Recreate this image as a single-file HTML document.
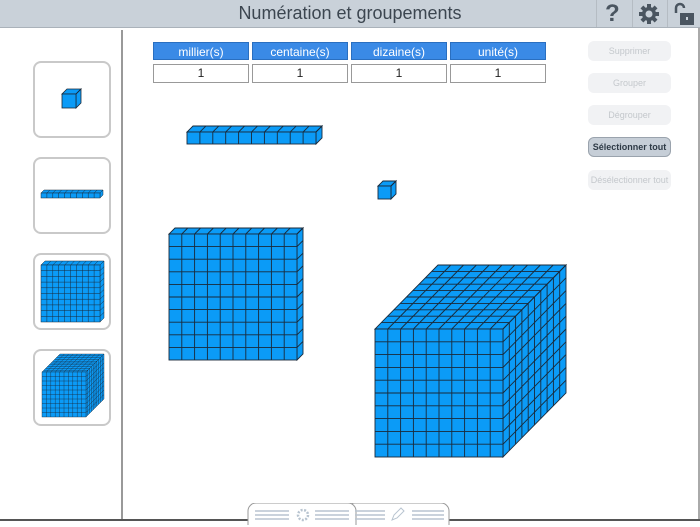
<!DOCTYPE html>
<html><head><meta charset="utf-8">
<style>
body{margin:0;width:700px;height:525px;overflow:hidden;background:#fff;font-family:"Liberation Sans",sans-serif;position:relative}
.hdr{position:absolute;left:0;top:0;width:700px;height:27px;background:#c9d1d9;border-bottom:1px solid #aab2ba}
.hdr .t{position:absolute;left:0;width:700px;text-align:center;top:3px;font-size:18px;color:#3c4650}
.abs{position:absolute}
.th{position:absolute;top:42px;height:18px;width:96px;background:#3a8ae6;color:#fff;font-size:12px;text-align:center;line-height:18px;border:1px solid #2a6fc0;box-sizing:border-box}
.td{position:absolute;top:64px;height:19px;width:96px;background:#fff;border:1px solid #999;box-sizing:border-box;font-size:12px;text-align:center;line-height:17px;color:#222}
.btn{position:absolute;left:588px;width:83px;height:20px;border-radius:6px;background:#f1f2f4;color:#c4c8cc;font-size:9px;text-align:center;line-height:20px}
.box{position:absolute;left:33px;width:78px;height:77px;border:2px solid #c9c9c9;border-radius:8px;box-sizing:border-box}
</style></head><body>
<div class="hdr"><div class="t">Numération et groupements</div>
<div class="abs" style="left:596px;top:0;width:1px;height:27px;background:#b5bcc3"></div>
<div class="abs" style="left:632px;top:0;width:1px;height:27px;background:#b5bcc3"></div>
<div class="abs" style="left:667px;top:0;width:1px;height:27px;background:#b5bcc3"></div>
<div class="abs" style="left:605px;top:0px;font-size:24px;font-weight:bold;color:#4a5560">?</div>
<svg class="abs" style="left:638px;top:3px" width="22" height="22" viewBox="0 0 22 22"><g fill="#4a5560"><circle cx="11" cy="11" r="7"/><g id="g"><rect x="9" y="1" width="4" height="20"/></g><use href="#g" transform="rotate(45 11 11)"/><use href="#g" transform="rotate(90 11 11)"/><use href="#g" transform="rotate(135 11 11)"/></g><circle cx="11" cy="11" r="3.5" fill="#c9d1d9"/></svg>
<svg class="abs" style="left:671px;top:2px" width="26" height="24" viewBox="0 0 26 24"><path d="M5 11V6a4 4 0 0 1 8 0" fill="none" stroke="#4a5560" stroke-width="2.5"/><rect x="9" y="11" width="14" height="12" fill="#4a5560"/><rect x="15" y="15" width="2" height="3" fill="#c9d1d9"/></svg>
</div>
<div class="abs" style="left:121px;top:30px;width:2px;height:490px;background:#999"></div>
<div class="abs" style="left:698px;top:28px;width:2px;height:497px;background:#aaa"></div>
<div class="abs" style="left:0;top:519px;width:700px;height:6px;background:#fff;border-top:2px solid #555"></div>
<div class="th" style="left:153px">millier(s)</div><div class="th" style="left:252px">centaine(s)</div><div class="th" style="left:351px">dizaine(s)</div><div class="th" style="left:450px">unité(s)</div>
<div class="td" style="left:153px">1</div><div class="td" style="left:252px">1</div><div class="td" style="left:351px">1</div><div class="td" style="left:450px">1</div>
<div class="btn" style="top:41px">Supprimer</div>
<div class="btn" style="top:73px">Grouper</div>
<div class="btn" style="top:105px">Dégrouper</div>
<div class="btn" style="top:137px;background:#c6ced7;border:1px solid #9aa3ad;color:#2e3a46;font-weight:bold;box-sizing:border-box;line-height:18px">Sélectionner tout</div>
<div class="btn" style="top:170px">Désélectionner tout</div>
<div class="box" style="top:61px"></div><div class="box" style="top:157px"></div><div class="box" style="top:253px"></div><div class="box" style="top:349px"></div>
<svg class="abs" style="left:247px;top:503px" width="210" height="22" viewBox="0 0 210 22">
<path d="M100 22V8a8 8 0 0 1 8-8h86a8 8 0 0 1 8 8v14" fill="#fff" stroke="#999"/>
<path d="M1 22V8a8 8 0 0 1 8-8h92a8 8 0 0 1 8 8v14" fill="#fff" stroke="#999"/>
<g stroke="#b8c4d0" stroke-width="1.5"><path d="M8 8h34M8 12h34M8 16h34M68 8h34M68 12h34M68 16h34M108 8h30M108 12h30M108 16h30M165 8h32M165 12h32M165 16h32"/></g>
<circle cx="56" cy="12" r="5" fill="none" stroke="#b8c4d0" stroke-width="2.5" stroke-dasharray="2 1.5"/>
<path d="M145 17l2-5 7-7 3 3-7 7z" fill="none" stroke="#b8c4d0"/>
</svg>
<svg id="s" class="abs" style="left:0;top:0" width="700" height="525"></svg>
<script>
var S=document.getElementById('s'),out='';
function P(pts){return pts.map(p=>p[0].toFixed(2)+','+p[1].toFixed(2)).join(' ');}
function cub(x,y,w,h,nc,nr,dx,dy,nd,sw){
 var c='#0b9bf7',st='stroke="#1a2a3a" stroke-width="'+sw+'"';
 // top
 out+='<polygon points="'+P([[x,y],[x+w,y],[x+w+dx,y+dy],[x+dx,y+dy]])+'" fill="'+c+'" '+st+'/>';
 out+='<polygon points="'+P([[x+w,y],[x+w+dx,y+dy],[x+w+dx,y+h+dy],[x+w,y+h]])+'" fill="'+c+'" '+st+'/>';
 out+='<rect x="'+x+'" y="'+y+'" width="'+w+'" height="'+h+'" fill="'+c+'" '+st+'/>';
 var l='';
 for(var i=1;i<nc;i++){var X=x+w*i/nc;l+='M'+X+' '+y+'v'+h+'M'+X+' '+y+'l'+dx+' '+dy;}
 l+='M'+(x+w)+' '+y+'l'+dx+' '+dy;
 for(var j=1;j<nr;j++){var Y=y+h*j/nr;l+='M'+x+' '+Y+'h'+w+'M'+(x+w)+' '+Y+'l'+dx+' '+dy;}
 for(var k=1;k<nd;k++){var fx=dx*k/nd,fy=dy*k/nd;l+='M'+(x+fx)+' '+(y+fy)+'h'+w+'M'+(x+w+fx)+' '+(y+fy)+'v'+h;}
 out+='<path d="'+l+'" fill="none" '+st+'/>';
}
cub(375,329,128,128,10,10,63,-64,10,0.9);
cub(169,234,128,126,10,10,6,-6,1,0.9);
cub(187,132,129,12,10,1,6,-6,1,0.9);
cub(378,186,13,13,1,1,5,-5,1,0.9);
cub(62,94,14,14,1,1,5,-5,1,0.8);
cub(41,193,59,5,10,1,3,-3,1,0.5);
cub(41,265,59,57,10,10,4,-4,1,0.5);
cub(42,372,44,45,10,10,18,-18,10,0.4);
S.innerHTML=out;
</script>
</body></html>
